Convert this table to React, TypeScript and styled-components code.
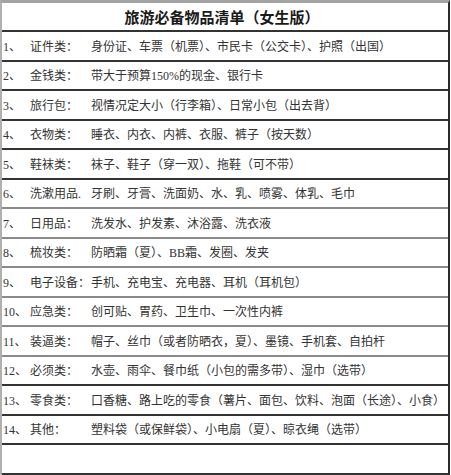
import { FC } from 'react';
import styled, { createGlobalStyle } from 'styled-components';

const GlobalStyle = createGlobalStyle`
  html, body {
    margin: 0;
    padding: 0;
    background: #fff;
  }
  body {
    font-family: "Liberation Serif", "Noto Sans CJK SC", serif;
    color: #222;
  }
`;

type Item = {
  no: string;
  label: string;
  content: string;
};

const items: Item[] = [
  { no: '1、', label: '证件类：', content: '身份证、车票（机票）、市民卡（公交卡）、护照（出国）' },
  { no: '2、', label: '金钱类：', content: '带大于预算150%的现金、银行卡' },
  { no: '3、', label: '旅行包：', content: '视情况定大小（行李箱）、日常小包（出去背）' },
  { no: '4、', label: '衣物类：', content: '睡衣、内衣、内裤、衣服、裤子（按天数）' },
  { no: '5、', label: '鞋袜类：', content: '袜子、鞋子（穿一双）、拖鞋（可不带）' },
  { no: '6、', label: '洗漱用品.', content: '牙刷、牙膏、洗面奶、水、乳、喷雾、体乳、毛巾' },
  { no: '7、', label: '日用品：', content: '洗发水、护发素、沐浴露、洗衣液' },
  { no: '8、', label: '梳妆类：', content: '防晒霜（夏）、BB霜、发圈、发夹' },
  { no: '9、', label: '电子设备：', content: '手机、充电宝、充电器、耳机（耳机包）' },
  { no: '10、', label: '应急类：', content: '创可贴、胃药、卫生巾、一次性内裤' },
  { no: '11、', label: '装逼类：', content: '帽子、丝巾（或者防晒衣，夏）、墨镜、手机套、自拍杆' },
  { no: '12、', label: '必须类：', content: '水壶、雨伞、餐巾纸（小包的需多带）、湿巾（选带）' },
  { no: '13、', label: '零食类：', content: '口香糖、路上吃的零食（薯片、面包、饮料、泡面（长途）、小食）' },
  { no: '14、', label: '其他：', content: '塑料袋（或保鲜袋）、小电扇（夏）、晾衣绳（选带）' },
];

const Sheet = styled.div`
  width: 450px;
  box-sizing: border-box;
  border-top: 3px solid #a3a3a3;
  border-left: 2px solid #b0b0b0;
  border-right: 2px solid #2a2a2a;
`;

const TitleRow = styled.div`
  height: 27px;
  display: flex;
  align-items: center;
  justify-content: center;
  border-bottom: 2px solid #333;
  font-family: "Liberation Serif", "Noto Sans CJK SC", serif;
  font-size: 15px;
  font-weight: 700;
  color: #1a1a1a;
  padding-right: 6px;
`;

const Row = styled.div<{ $light?: boolean }>`
  height: 29.5px;
  box-sizing: border-box;
  display: grid;
  grid-template-columns: 27px 61px 1fr;
  align-items: center;
  border-bottom: 2px solid ${(p) => (p.$light ? '#8a8a8a' : '#333')};
  font-size: 12px;
  white-space: nowrap;
  padding-left: 1px;
`;

const No = styled.span`
  color: #333;
`;

const Label = styled.span`
  color: #333;
`;

const Content = styled.span`
  color: #333;
  overflow: hidden;
`;

const lightRows = new Set([5, 6, 7, 8, 9, 10]);

const App: FC = () => {
  return (
    <>
      <GlobalStyle />
      <Sheet>
        <TitleRow>旅游必备物品清单（女生版）</TitleRow>
        {items.map((item, i) => (
          <Row key={item.no} $light={lightRows.has(i)}>
            <No>{item.no}</No>
            <Label>{item.label}</Label>
            <Content>{item.content}</Content>
          </Row>
        ))}
        <Row />
      </Sheet>
    </>
  );
};

export default App;
